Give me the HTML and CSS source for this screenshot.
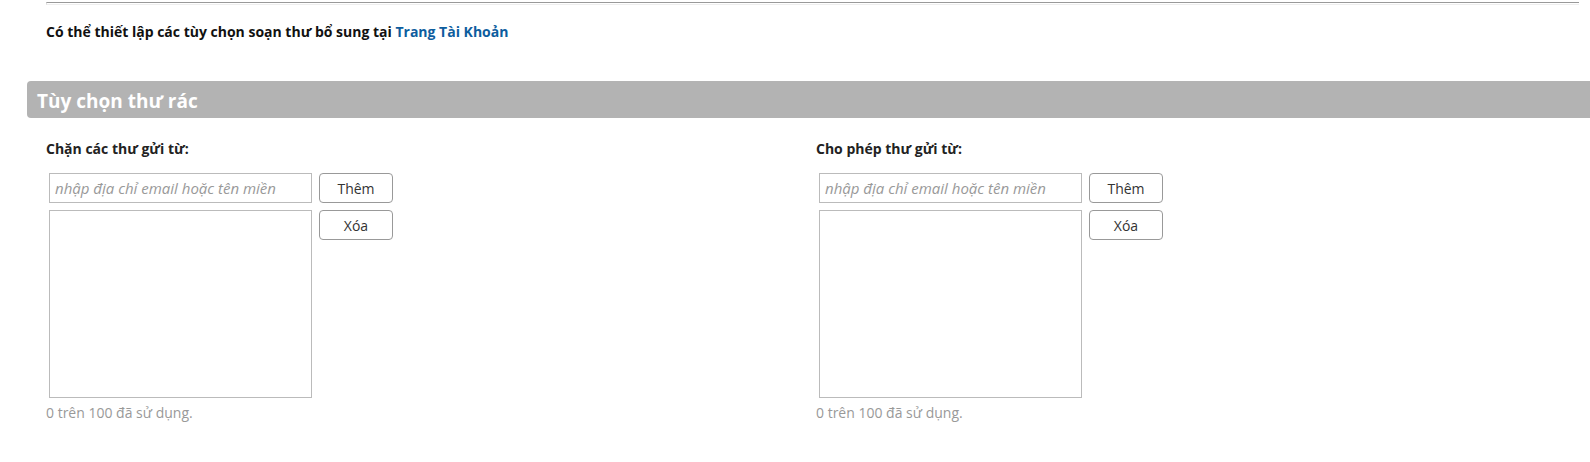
FILE: index.html
```html
<!DOCTYPE html>
<html lang="vi">
<head>
<meta charset="utf-8">
<title>Tùy chọn thư rác</title>
<link rel="stylesheet" href="styles.css">
</head>
<body>
<div class="page">
  <div class="rule"></div>
  <p class="note">Có thể thiết lập các tùy chọn soạn thư bổ sung tại <a href="#" class="link">Trang Tài Khoản</a></p>
  <h2 class="section-title">Tùy chọn thư rác</h2>
  <div class="lists">
    <div class="list-col">
      <div class="list-label">Chặn các thư gửi từ:</div>
      <div class="list-body">
        <div class="fields">
          <input class="addr" type="text" placeholder="nhập địa chỉ email hoặc tên miền">
          <div class="box"></div>
          <div class="usage">0 trên 100 đã sử dụng.</div>
        </div>
        <div class="buttons">
          <button class="btn">Thêm</button>
          <button class="btn">Xóa</button>
        </div>
      </div>
    </div>
    <div class="list-col">
      <div class="list-label">Cho phép thư gửi từ:</div>
      <div class="list-body">
        <div class="fields">
          <input class="addr" type="text" placeholder="nhập địa chỉ email hoặc tên miền">
          <div class="box"></div>
          <div class="usage">0 trên 100 đã sử dụng.</div>
        </div>
        <div class="buttons">
          <button class="btn">Thêm</button>
          <button class="btn">Xóa</button>
        </div>
      </div>
    </div>
  </div>
</div>
</body>
</html>
```
FILE: styles.css
```css
html, body {
  margin: 0;
  padding: 0;
  background: #fff;
}
body {
  font-family: "Open Sans", "Noto Sans", sans-serif;
  color: #222;
}
.page {
  padding: 2px 0 0 27px;
}
.rule {
  margin-left: 19px;
  width: 1532px;
  height: 1px;
  border-top: 1px solid #999;
  border-bottom: 1px solid #eee;
  border-left: 1px solid #ddd;
}
.note {
  margin: 17px 0 0 19px;
  font-size: 14px;
  font-weight: bold;
  line-height: 19px;
  color: #111;
}
.link {
  color: #0d5d9e;
  text-decoration: none;
}
.section-title {
  margin: 40px 0 0 0;
  height: 35px;
  padding: 2px 0 0 10px;
  background: #b3b3b3;
  border-radius: 4px 0 0 4px;
  color: #fff;
  font-size: 19px;
  font-weight: bold;
  line-height: 37px;
}
.lists {
  display: grid;
  grid-template-columns: 770px 770px;
  margin: 21px 0 0 19px;
}
.list-label {
  font-size: 14px;
  font-weight: bold;
  line-height: 19px;
  color: #222;
}
.list-body {
  display: flex;
  gap: 7px;
  margin-top: 15px;
  padding-left: 3px;
}
.fields {
  display: flex;
  flex-direction: column;
}
.addr {
  box-sizing: border-box;
  width: 263px;
  height: 30px;
  margin: 0;
  padding: 0 5px;
  border: 1px solid #bbb;
  border-radius: 0;
  font-family: inherit;
  font-size: 15px;
  outline: none;
}
.addr::placeholder {
  color: #999;
  font-style: italic;
}
.box {
  box-sizing: border-box;
  width: 263px;
  height: 188px;
  margin-top: 7px;
  border: 1px solid #bbb;
}
.usage {
  margin: 5px 0 0 -3px;
  font-size: 14px;
  line-height: 19px;
  color: #999;
}
.buttons {
  display: flex;
  flex-direction: column;
  gap: 7px;
}
.btn {
  box-sizing: border-box;
  width: 74px;
  height: 30px;
  margin: 0;
  padding: 0;
  background: #fff;
  border: 1px solid #999;
  border-radius: 4px;
  font-family: inherit;
  font-size: 14px;
  color: #333;
}
```
